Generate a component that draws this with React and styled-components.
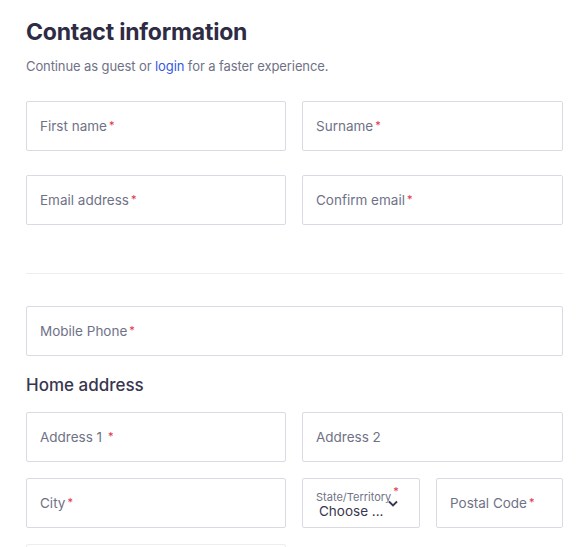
import React from 'react';
import styled, { createGlobalStyle } from 'styled-components';

const GlobalStyle = createGlobalStyle`
    body {
        margin: 0;
        background: #fff;
        font-family: Inter, "Noto Sans", sans-serif;
        color: #39364f;
    }
`;

const Page = styled.div`
    width: 537px;
    padding: 17px 0 0 26px;
    overflow: hidden;
    height: 530px;
`;

const Title = styled.h1`
    margin: 0;
    font-size: 23px;
    line-height: 30px;
    font-weight: 700;
    color: #2e2b45;
    letter-spacing: -0.2px;
`;

const Subtitle = styled.p`
    margin: 6px 0 0;
    font-size: 13px;
    line-height: 26px;
    color: #6f7287;
    letter-spacing: -0.1px;
`;

const Link = styled.a`
    color: #3659e3;
    text-decoration: none;
`;

const Row = styled.div`
    display: grid;
    grid-template-columns: ${p => p.cols || '260px 1fr'};
    gap: 16px;
    margin-top: ${p => p.top || 0}px;
`;

const Field = styled.div`
    height: 50px;
    box-sizing: border-box;
    border: 1px solid #dbdae3;
    border-radius: 2px;
    display: flex;
    align-items: center;
    padding-left: 13px;
    font-size: 13.5px;
    color: #6f7287;
    white-space: pre;
`;

const Req = styled.sup`
    color: #e0314a;
    font-size: 11px;
    margin-left: 2px;
    position: relative;
    top: -1px;
`;

const Divider = styled.hr`
    border: 0;
    border-top: 1px solid #eeedf2;
    margin: 48px 0 32px;
`;

const Heading = styled.h2`
    margin: 17px 0 15px;
    font-size: 17px;
    line-height: 24px;
    font-weight: 500;
    color: #39364f;
`;

const SelectBox = styled(Field)`
    flex-direction: column;
    align-items: flex-start;
    justify-content: center;
    position: relative;
`;

const SelectLabel = styled.div`
    font-size: 11px;
    line-height: 13px;
    color: #6f7287;
`;

const SelectValue = styled.div`
    font-size: 13.5px;
    line-height: 17px;
    color: #39364f;
    margin-left: 3px;
`;

const Chevron = styled.svg`
    position: absolute;
    right: 21px;
    top: 21px;
`;

const Partial = styled(Field)`
    border-color: #eeedf2;
`;

function Input({ label, required }) {
    return (
        <Field>
            {label}
            {required && <Req>*</Req>}
        </Field>
    );
}

export default function App() {
    return (
        <Page>
            <GlobalStyle />
            <Title>Contact information</Title>
            <Subtitle>
                Continue as guest or <Link href="#">login</Link> for a faster experience.
            </Subtitle>
            <Row top={22}>
                <Input label="First name" required />
                <Input label="Surname" required />
            </Row>
            <Row top={24}>
                <Input label="Email address" required />
                <Input label="Confirm email" required />
            </Row>
            <Divider />
            <Row cols="1fr">
                <Input label="Mobile Phone" required />
            </Row>
            <Heading>Home address</Heading>
            <Row>
                <Input label="Address 1 " required />
                <Input label="Address 2" />
            </Row>
            <Row top={16}>
                <Input label="City" required />
                <Row cols="118px 1fr">
                    <SelectBox>
                        <SelectLabel>State/Territory<Req>*</Req></SelectLabel>
                        <SelectValue>Choose ...</SelectValue>
                        <Chevron width="10" height="7" viewBox="0 0 10 7">
                            <path d="M1 1.5 L5 5.5 L9 1.5" fill="none" stroke="#39364f" strokeWidth="1.8" />
                        </Chevron>
                    </SelectBox>
                    <Input label="Postal Code" required />
                </Row>
            </Row>
            <Row top={16}>
                <Partial />
                <div />
            </Row>
        </Page>
    );
}
